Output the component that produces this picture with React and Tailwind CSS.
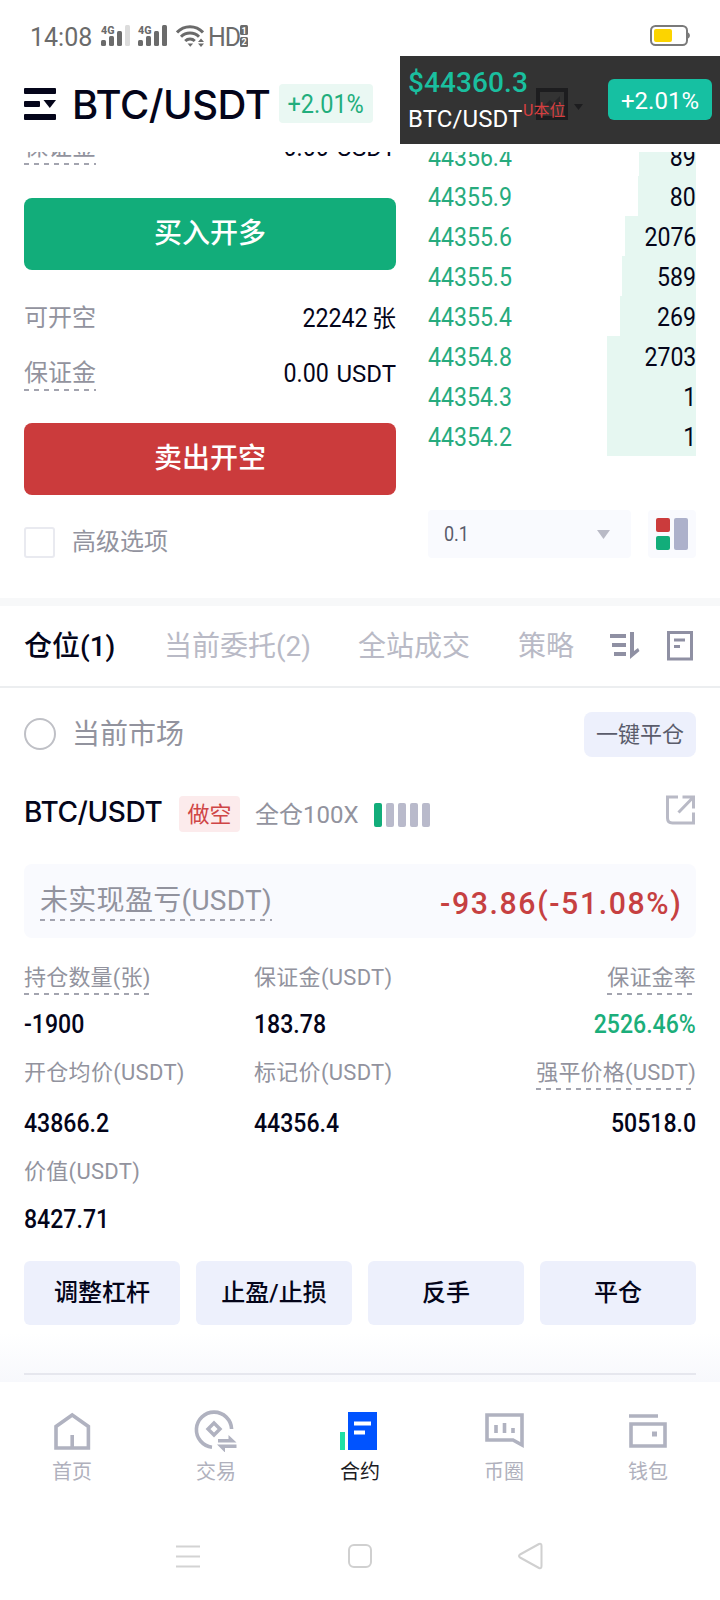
import clsx from 'clsx'

const bids = [
  { price: '44356.4', amount: '89', depth: 57 },
  { price: '44355.9', amount: '80', depth: 58 },
  { price: '44355.6', amount: '2076', depth: 71 },
  { price: '44355.5', amount: '589', depth: 74 },
  { price: '44355.4', amount: '269', depth: 76 },
  { price: '44354.8', amount: '2703', depth: 89 },
  { price: '44354.3', amount: '1', depth: 89 },
  { price: '44354.2', amount: '1', depth: 89 }
]

const actions = ['调整杠杆', '止盈/止损', '反手', '平仓']

function Dashed({ children, className }) {
  return (
    <span className={clsx('relative whitespace-nowrap', className)}>
      {children}
      <span className="absolute left-0 right-0 bottom-0 h-[2px] bg-[repeating-linear-gradient(90deg,#a3a4af_0_5px,transparent_5px_10px)]" />
    </span>
  )
}

function SignalIcon({ weak }) {
  return (
    <svg className="overflow-visible" width="30" height="22" viewBox="0 0 30 22" fill="#6b6b6b">
      <text x="0" y="8.5" fontSize="11.5" fontWeight="800" fontFamily="Roboto, sans-serif" textLength="13.5" lengthAdjust="spacingAndGlyphs">4G</text>
      <rect x="0" y="15" width="5" height="6" rx="1.5" />
      <rect x="8" y="11" width="5" height="10" rx="1.5" />
      <rect x="16" y="6" width="5" height="15" rx="1.5" />
      <rect x="24" y="0" width="5" height="21" rx="1.5" fill={weak ? '#dcdcdc' : '#6b6b6b'} />
    </svg>
  )
}

function StatusBar() {
  return (
    <div className="h-14 shrink-0 flex items-center pl-[30px] pr-[30px] pt-4 text-[#6b6b6b]">
      <span className="w-[71px] text-[25px] leading-none pt-[2px]">14:08</span>
      <SignalIcon weak />
      <span className="w-[7px]" />
      <SignalIcon />
      <svg className="ml-2" width="28" height="22" viewBox="0 0 28 22" fill="none" stroke="#6b6b6b" strokeWidth="3">
        <path d="M1 7.5C8-.2 20-.2 27 7.5" />
        <path d="M5 11.8c5-5 13-5 18 0" />
        <path d="M9.2 16c2.7-2.6 6.9-2.6 9.6 0" />
        <path d="M11.5 18.6h5.6l-2.8 3.2z" fill="#6b6b6b" stroke="none" />
        <path d="M22 17l3-3.5 3 3.5zM22 18.5l3 3.5 3-3.5z" fill="#6b6b6b" stroke="none" />
      </svg>
      <span className="ml-[4px] pt-[2px] text-[25px] leading-none tracking-[-1px]">HD</span>
      <svg className="overflow-visible" width="8" height="22" viewBox="0 0 8 22" fill="#6b6b6b">
        <rect width="8" height="10" rx="1.5" />
        <rect y="12" width="8" height="10" rx="1.5" />
        <text x="4" y="8.5" fontSize="9" fontWeight="700" fill="#fff" textAnchor="middle" fontFamily="Roboto, sans-serif">1</text>
        <text x="4" y="20.3" fontSize="9" fontWeight="700" fill="#fff" textAnchor="middle" fontFamily="Roboto, sans-serif">2</text>
      </svg>
      <svg className="ml-auto" width="40" height="22" viewBox="0 0 40 22">
        <rect x="1" y="1" width="36" height="19" rx="4.5" fill="#fff" stroke="#7a7a7a" strokeWidth="2" />
        <rect x="4" y="4" width="18" height="13" rx="2" fill="#fcd400" />
        <path d="M38 7.5c2.5 1 2.5 5 0 6z" fill="#7a7a7a" />
      </svg>
    </div>
  )
}

function TickerOverlay() {
  return (
    <div className="absolute left-[400px] top-14 w-[320px] h-[88px] bg-[#333333] flex items-start pl-2 pr-2">
      <div className="pt-[13px]">
        <div className="text-[28px] leading-[28px] font-medium tracking-[0.1px] text-[#1abf9f]">$44360.3</div>
        <div className="mt-[8px] text-[24px] leading-[28px] tracking-[0.1px] text-white">BTC/USDT</div>
      </div>
      <svg className="absolute left-[136px] top-8" width="48" height="32" viewBox="0 0 48 32">
        <rect x="2" y="2" width="28" height="28" fill="none" stroke="#1d1d1f" strokeWidth="4" />
        <path d="M8 18l6-6 3 3 7-7v10H8z" fill="#262628" />
        <path d="M38 16h9l-4.5 6z" fill="#1d1d1f" />
      </svg>
      <span className="absolute left-[123px] top-[45px] text-[16px] leading-[20px] text-[#d63f40]">U本位</span>
      <div className="ml-auto mt-[23px] w-[104px] h-[41px] rounded-md bg-[#16c0a2] text-white text-[24px] flex items-center justify-center pt-[2px]">
        +2.01%
      </div>
    </div>
  )
}

function Header() {
  return (
    <div className="h-24 shrink-0 flex items-start pl-6 bg-white">
      <svg className="mt-8" width="32" height="32" viewBox="0 0 32 32" fill="#04051a">
        <rect width="32" height="6" rx="1" />
        <rect y="13" width="16" height="6" rx="1" />
        <rect y="26" width="32" height="6" rx="1" />
        <path d="M19.5 12H32l-6.2 8z" />
      </svg>
      <h1 className="ml-4 mt-[25px] w-[200px] text-[40px] leading-[48px] font-[550] font-['Inter',sans-serif] tracking-[-0.5px] text-[#04051a] whitespace-nowrap">BTC/USDT</h1>
      <span className="ml-[7px] mt-7 w-[94px] h-[39px] rounded bg-[#eaf8f3] text-[#22ae7d] text-[25px] flex items-center justify-center pt-[2px]">
        <span className="scale-x-[0.94]">+2.01%</span>
      </span>
    </div>
  )
}

function OrderRow({ label, amount, unit, dashed }) {
  return (
    <div className="h-[55px] flex items-center justify-between text-[24px]">
      {dashed
        ? <Dashed className="h-9 leading-[37px] text-[#92939e]">{label}</Dashed>
        : <span className="text-[#92939e]">{label}</span>}
      <span className="flex items-center text-[#04051a] pt-[2px]">
        <span className="text-[25.5px] origin-right scale-x-[0.91]">{amount}</span>
        <span className={unit === '张' ? 'ml-1' : 'ml-2'}>{unit}</span>
      </span>
    </div>
  )
}

function OrderPanel() {
  return (
    <div className="w-[372px] -mt-[33px]">
      <OrderRow label="保证金" amount="0.00" unit="USDT" dashed />
      <button className="mt-6 w-full h-[72px] rounded-lg bg-[#12ad7a] text-white text-[28px] font-medium block">买入开多</button>
      <div className="h-5" />
      <OrderRow label="可开空" amount="22242" unit="张" />
      <OrderRow label="保证金" amount="0.00" unit="USDT" dashed />
      <button className="mt-[23px] w-full h-[72px] rounded-lg bg-[#cb3b3c] text-white text-[28px] font-medium block">卖出开空</button>
      <div className="mt-8 flex items-center text-[24px] leading-[31px] text-[#92939e]">
        <span className="w-[31px] h-[31px] rounded-[3px] border-2 border-[#e9eaf0] mr-[17px]" />
        高级选项
      </div>
    </div>
  )
}

function OrderBook() {
  return (
    <div className="w-[268px] -mt-4">
      {bids.map(bid => (
        <div key={bid.price} className="relative h-10 flex items-center justify-between text-[25.5px] pt-[3px]">
          <span className="absolute right-0 inset-y-0 bg-[#e6f7f1]" style={{ width: bid.depth }} />
          <span className="relative origin-left scale-x-[0.905] text-[#27ab7d]">{bid.price}</span>
          <span className="relative origin-right scale-x-[0.905] text-[#04051a]">{bid.amount}</span>
        </div>
      ))}
      <div className="mt-[54px] flex justify-between">
        <div className="w-[203px] h-12 rounded bg-[#f9fafe] flex items-center justify-between pl-4 pr-[21px] text-[20px] text-[#5a5c6b]">
          <span className="origin-left scale-x-[0.9]">0.1</span>
          <svg width="13" height="9" viewBox="0 0 13 9" fill="#b9bac6"><path d="M0 0h13L6.5 9z" /></svg>
        </div>
        <div className="w-12 h-12 rounded bg-[#f9fafe] flex items-center justify-center gap-1">
          <div className="flex flex-col gap-1">
            <span className="w-[14px] h-[14px] rounded-[2px] bg-[#cb3b3c]" />
            <span className="w-[14px] h-[14px] rounded-[2px] bg-[#12ad7a]" />
          </div>
          <span className="w-[14px] h-8 rounded-[2px] bg-[#adb1cb]" />
        </div>
      </div>
    </div>
  )
}

function Tabs() {
  return (
    <div className="h-[82px] shrink-0 flex items-center pl-6 pr-[27px] border-b-2 border-[#eceef0] text-[28px] text-[#b9bac6] whitespace-nowrap">
      <span className="w-[140px] pt-[2px] font-medium text-[#04051a]">仓位(1)</span>
      <span className="w-[194px] pt-[2px]">当前委托(2)</span>
      <span className="w-40 pt-[2px]">全站成交</span>
      <span className="w-[92px] pt-[2px]">策略</span>
      <svg width="30" height="28" viewBox="0 0 30 28" fill="#8f90a3">
        <path d="M0 2h16v4H0zM2 11h14v4H2zM4 20h12v4H4z" />
        <path d="M20 0h4v19l4-3 1.5 3L20 27z" />
      </svg>
      <svg className="ml-auto" width="26" height="30" viewBox="0 0 26 30" fill="none" stroke="#8f90a3" strokeWidth="3">
        <path d="M1.5 1.5h23v26.5h-23zM7 9h11M7 15.5h6" />
      </svg>
    </div>
  )
}

function Stat({ label, value, dashed, right, green, className }) {
  return (
    <div className={clsx('flex flex-col', right ? 'items-end' : 'items-start', className)}>
      {dashed
        ? <Dashed className="h-[34px] leading-[33px] text-[22px] tracking-[0.2px] text-[#92939e]">{label}</Dashed>
        : <span className="h-[34px] leading-[33px] text-[22px] tracking-[0.3px] text-[#92939e] whitespace-nowrap">{label}</span>}
      <span className={clsx('mt-auto -mb-px pb-px text-[25.5px] leading-[30px] font-medium scale-x-[0.905]', right ? 'origin-right' : 'origin-left', green ? 'text-[#1bae7a]' : 'text-[#04051a]')}>{value}</span>
    </div>
  )
}

function Position() {
  return (
    <div className="px-6 shrink-0">
      <div className="mt-6 h-[45px] flex items-center text-[28px] text-[#92939e]">
        <span className="w-8 h-8 -mt-[2px] rounded-full border-2 border-[#bfc0c6] mr-4" />
        当前市场
        <button className="ml-auto w-28 h-[45px] rounded-lg bg-[#edf0fc] text-[22px] text-[#5a5c6b]">一键平仓</button>
      </div>

      <div className="mt-[38px] h-[36px] flex items-center">
        <span className="w-[155px] -mt-[3px] text-[28px] leading-none font-[550] font-['Inter',sans-serif] tracking-[-0.4px] text-[#04051a]">BTC/USDT</span>
        <span className="w-[61px] h-9 mt-[2px] rounded bg-[#fcebec] text-[22px] text-[#cf4546] flex items-center justify-center">做空</span>
        <span className="ml-[15px] mt-[3px] w-[119px] text-[24px] text-[#92939e]">全仓100X</span>
        <div className="flex gap-1 mt-[4px]">
          <span className="w-2 h-6 rounded-[2px] bg-[#12ad7a]" />
          {[0, 1, 2, 3].map(i => <span key={i} className="w-2 h-6 rounded-[2px] bg-[#b9bacb]" />)}
        </div>
        <svg className="ml-auto -mt-[6px]" width="30" height="30" viewBox="0 0 30 30" fill="none" stroke="#b9bac6" strokeWidth="3">
          <path d="M12 2H1.5v21q0 5 5 5h21V17.5M16.5 2h11v11.5M27 2.5L12.5 17.5" />
        </svg>
      </div>

      <div className="mt-[33px] h-[74px] rounded-lg bg-[#f9fafe] flex items-center justify-between px-4">
        <Dashed className="h-[40px] leading-[39px] text-[28px] tracking-[0.3px] text-[#92939e]">未实现盈亏(USDT)</Dashed>
        <span className="text-[32px] font-medium tracking-[1.7px] mt-[3px] -mr-[2px] origin-right scale-x-[0.945] text-[#c64041]">-93.86(-51.08%)</span>
      </div>

      <div className="mt-[23px] grid grid-cols-[230px_1fr_1fr]">
        <Stat className="h-[78px]" label="持仓数量(张)" value="-1900" dashed />
        <Stat label="保证金(USDT)" value="183.78" />
        <Stat label="保证金率" value="2526.46%" dashed right green />
        <Stat className="mt-[17px] h-[82px]" label="开仓均价(USDT)" value="43866.2" />
        <Stat className="mt-[17px]" label="标记价(USDT)" value="44356.4" />
        <Stat className="mt-[17px]" label="强平价格(USDT)" value="50518.0" dashed right />
        <Stat className="mt-[17px] h-[79px]" label="价值(USDT)" value="8427.71" />
      </div>

      <div className="mt-[27px] grid grid-cols-4 gap-4">
        {actions.map(name => (
          <button key={name} className="h-16 rounded-md bg-[#edf0fc] text-[24px] font-medium text-[#04051a]">{name}</button>
        ))}
      </div>
    </div>
  )
}

function NavItem({ label, active, children }) {
  return (
    <div className={clsx('w-36 flex flex-col items-center text-[20px] leading-[26px]', active ? 'text-[#1b1b22]' : 'text-[#b0b1bd]')}>
      <svg width="44" height="44" viewBox="0 0 44 44" fill="none" stroke="#b0b2c0" strokeWidth="3.6">{children}</svg>
      <span className="mt-[7px]">{label}</span>
    </div>
  )
}

function BottomNav() {
  return (
    <div className="h-[122px] shrink-0 pt-[26px] flex bg-white">
      <NavItem label="首页">
        <path d="M6 40V18.5L22.2 7l16.2 11.5V40zM22.2 40V27" />
      </NavItem>
      <NavItem label="交易">
        <path d="M18 39.2A17.6 17.6 0 1 1 37.6 21" />
        <path d="M20 15l6 6-6 6-6-6z" strokeWidth="3.4" />
        <path d="M24 34.500h18.500l-8-7.500v4H24zM42.500 36.500H23l8 8v-4.500h11.500z" fill="#b0b2c0" stroke="none" />
      </NavItem>
      <NavItem label="合约" active>
        <path d="M10 4h29v38H10z" fill="#0053ff" stroke="none" />
        <path d="M2 24h5v18H2z" fill="#1fe0a5" stroke="none" />
        <path d="M16 15.5h17M16 24.5h11" stroke="#fff" strokeWidth="4" />
      </NavItem>
      <NavItem label="币圈">
        <path d="M5 7h35v30l-9-5H5z" />
        <path d="M14 17v8M22.5 15v10M31 20v5" />
      </NavItem>
      <NavItem label="钱包">
        <path d="M3 8h29M5 16h34v22H5z" />
        <path d="M26 26h5" strokeWidth="5" />
      </NavItem>
    </div>
  )
}

function SystemNav() {
  return (
    <div className="h-24 flex justify-center gap-[144px] pt-[38px]">
      <svg width="28" height="28" viewBox="0 0 28 28" stroke="#d3d3d3" strokeWidth="2">
        <path d="M2 4.5h24M2 14.5h24M2 24.5h24" />
      </svg>
      <svg width="28" height="28" viewBox="0 0 28 28" fill="none" stroke="#d0d0d0" strokeWidth="2">
        <rect x="3" y="3" width="22" height="22" rx="5" />
      </svg>
      <svg width="28" height="28" viewBox="0 0 28 28" fill="none" stroke="#d0d0d0" strokeWidth="2" strokeLinejoin="round">
        <path d="M2 12.5L21 2q2.5-1 2.5 2v20q0 3-2.5 2L2 15.5q-2-1.5 0-3z" />
      </svg>
    </div>
  )
}

export default function App() {
  return (
    <div className="relative w-[720px] h-[1600px] overflow-hidden bg-white flex flex-col font-['Roboto','Noto_Sans_CJK_SC',sans-serif]">
      <StatusBar />
      <Header />
      <TickerOverlay />

      <div className="h-[446px] shrink-0 overflow-hidden px-6 flex justify-between">
        <OrderPanel />
        <OrderBook />
      </div>
      <div className="h-2 shrink-0 bg-[#f7f8f9]" />

      <Tabs />
      <Position />

      <div className="flex-1 mt-2 px-6 flex flex-col justify-end pb-[7px] bg-linear-to-b from-white to-[#f7f8fc]">
        <div className="h-[2px] bg-[#e6e7ee]" />
      </div>
      <BottomNav />
      <SystemNav />
    </div>
  )
}
